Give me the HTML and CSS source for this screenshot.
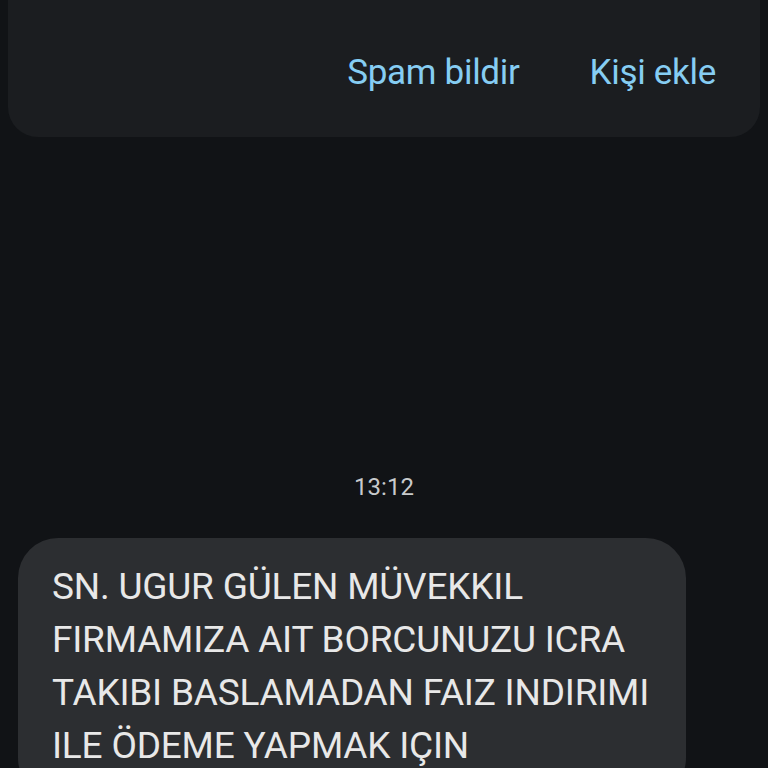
FILE: index.html
```html
<!DOCTYPE html>
<html lang="tr">
<head>
<meta charset="utf-8">
<link rel="stylesheet" href="styles.css">
</head>
<body>
<div class="screen">
  <div class="card">
    <div class="actions">
      <span class="action">Spam bildir</span>
      <span class="action">Kişi ekle</span>
    </div>
  </div>
  <div class="time">13:12</div>
  <div class="bubble">
    <p class="msg">SN. UGUR GÜLEN MÜVEKKIL<br>FIRMAMIZA AIT BORCUNUZU ICRA<br>TAKIBI BASLAMADAN FAIZ INDIRIMI<br>ILE ÖDEME YAPMAK IÇIN</p>
  </div>
</div>
</body>
</html>
```
FILE: styles.css
```css
html, body {
  margin: 0;
  padding: 0;
  background: #111316;
  overflow: hidden;
}
.screen {
  width: 768px;
  height: 768px;
  overflow: hidden;
  display: flex;
  flex-direction: column;
  font-family: Roboto, "Liberation Sans", sans-serif;
}
.card, .time, .bubble {
  flex-shrink: 0;
}
.card {
  margin: -40px 8px 0 8px;
  height: 177px;
  background: #1b1d20;
  border-radius: 0 0 30px 30px;
  display: flex;
  flex-direction: column;
  justify-content: flex-end;
}
.actions {
  display: flex;
  justify-content: flex-end;
  gap: 70px;
  padding: 0 44px 44px 0;
}
.action {
  color: #86cdf3;
  font-size: 35px;
  line-height: 40px;
  letter-spacing: -0.3px;
}
.time {
  margin-top: 335px;
  text-align: center;
  color: #c8cacc;
  font-size: 24px;
  line-height: 30px;
}
.bubble {
  margin: 36px 0 0 18px;
  width: 668px;
  height: 260px;
  background: #2c2e31;
  border-radius: 40px;
  padding: 22px 0 0 34px;
  box-sizing: border-box;
}
.msg {
  margin: 0;
  color: #e8e8e8;
  font-size: 37px;
  line-height: 53px;
  letter-spacing: -0.2px;
}
```
